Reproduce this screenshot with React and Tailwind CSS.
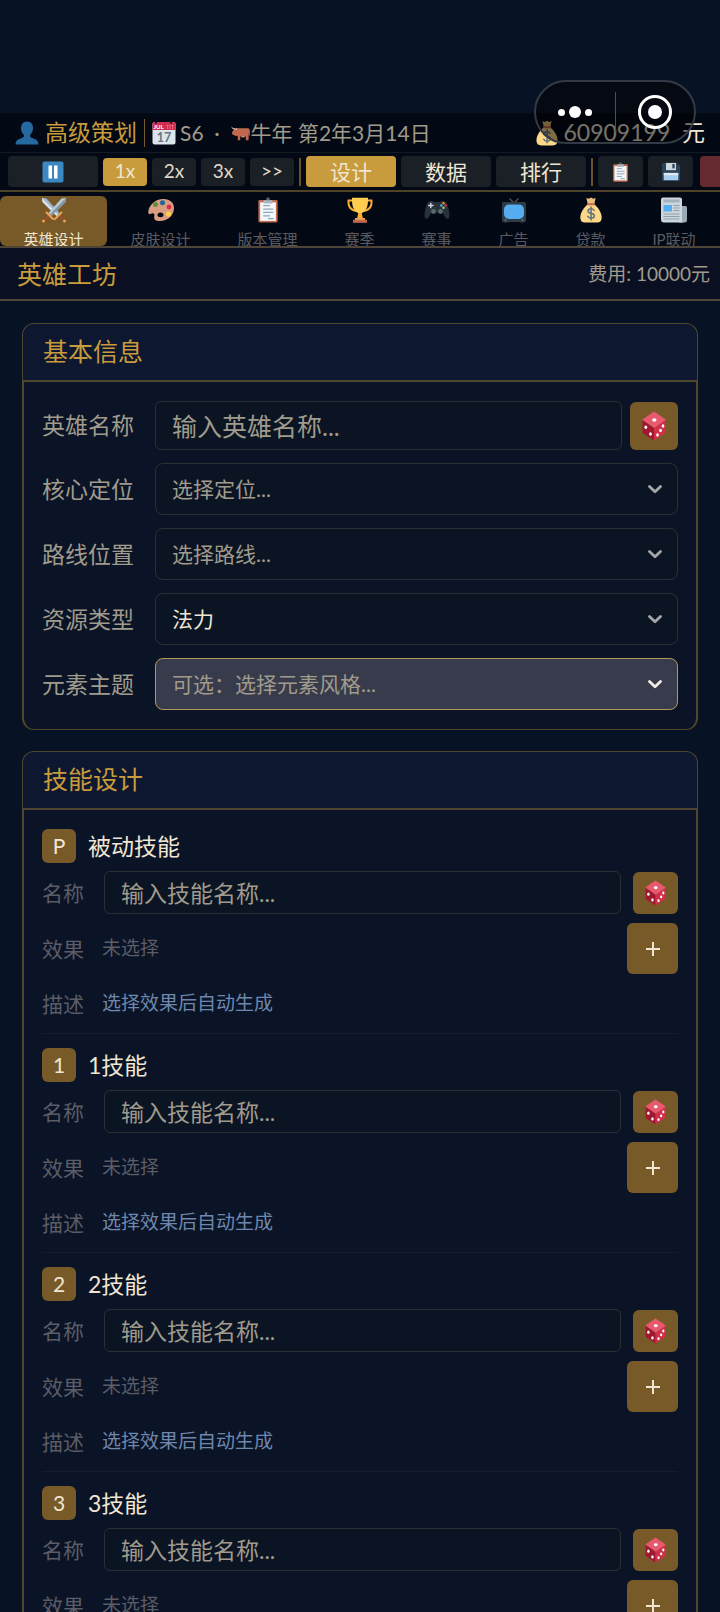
import React, { useState } from 'react';

const PersonIcon = ({ className }) => (
  <svg viewBox="0 0 24 24" className={className} aria-hidden="true">
    <path d="M12 .5c4 0 6 2.800 6 6.700 0 2.600-1.100 5-2.800 6.500-.7 1.700.2 2.800 2 3.400 3.600 1.100 6 2.400 6.300 6.400H.5c.3-4 2.700-5.300 6.300-6.400 1.800-.6 2.700-1.700 2-3.400C7.100 12.200 6 9.800 6 7.200 6 3.300 8 .5 12 .5z" fill="#24699f" />
  </svg>
);

const CalendarIcon = ({ className }) => (
  <svg viewBox="0 0 24 24" className={className} aria-hidden="true">
    <rect x=".5" y="1" width="23" height="22.500" rx="2" fill="#dde5ec" />
    <path d="M.5 9V3a2 2 0 0 1 2-2h19a2 2 0 0 1 2 2v6z" fill="#d52d4e" />
    <path d="M3 0h2v2.500H3zM18 0h2v2.500h-2z" fill="#10151f" />
    <text x="1.500" y="7.600" fontSize="6" fontWeight="700" fill="#fff">JUL</text>
    <path d="M15 4h1.200v1.200H15zM17.500 4h1.200v1.200h-1.200zM20 4h1.200v1.200H20zM15 6.400h1.200v1.200H15zM17.500 6.400h1.200v1.200h-1.200zM20 6.400h1.200v1.200H20z" fill="#f29bad" />
    <text x="12" y="20.800" fontSize="12.500" fontWeight="700" textAnchor="middle" fill="#66757f">17</text>
  </svg>
);

const OxIcon = ({ className }) => (
  <svg viewBox="0 0 24 20" className={className} aria-hidden="true">
    <path d="M4 4h16.500c1.800 0 2.500 1.500 2.500 3.500v6h-1V10l-.5 3v6H18v-4.500H11V19H8v-4.500L7 13l-1 1-3-1.500-2-.5L.8 9 3 6z" fill="#c1694f" />
    <path d="M.3 1.500C1 3.800 2.500 4.200 4.200 4.200l.6 1.400C2 5.800-.2 4 .3 1.500zM7 3.500C6.800 4.300 6 5 5 5l.5 1C7 5.800 7.500 4.700 7 3.500z" fill="#e8dfd3" />
    <path d="M12.500 14h4v1.500h-4z" fill="#e39f8a" />
  </svg>
);

const MoneyIcon = ({ className }) => (
  <svg viewBox="0 0 24 28" className={className} aria-hidden="true">
    <path d="M7 1l2.500 1L12 .5 14.500 2 17 1l-1.500 6.500h-7z" fill="#e9bf7b" />
    <path d="M8.300 8h7.400c4.300 3.500 7.800 9 7.800 14 0 4-2 5.500-5.500 5.500H6C2.500 27.500.5 26 .5 22 .5 17 4 11.500 8.300 8z" fill="#fdd888" />
    <rect x="7.500" y="6.600" width="9" height="2.200" rx="1.100" fill="#bf6952" />
    <path d="M15.400 14.300c-.6-1.100-1.800-1.700-3.300-1.700-2 0-3.300 1-3.300 2.500 0 3.600 6.800 1.500 6.800 5.200 0 1.500-1.500 2.600-3.500 2.600-1.700 0-3.100-.8-3.600-2.100M12.100 10.700v14" fill="none" stroke="#67757f" strokeWidth="1.700" strokeLinecap="round" />
  </svg>
);

const PauseIcon = ({ className }) => (
  <svg viewBox="0 0 22 22" className={className} aria-hidden="true">
    <rect x=".5" y=".5" width="21" height="21" rx="2" fill="#3b88c3" />
    <path d="M6.500 4.500H10v13H6.500zM12 4.500h3.500v13H12z" fill="#fff" />
  </svg>
);

const ClipboardIcon = ({ className }) => (
  <svg viewBox="0 0 22 27" className={className} aria-hidden="true">
    <rect x="1" y="3" width="20" height="23.500" rx="1.500" fill="#c1694f" />
    <path d="M2.800 5.500h16.400v19.300H2.800z" fill="#f4f7f9" />
    <path d="M6 9h7M6 12.500h10.500M6 16h10.500M6 19.500h7M11 22.500h6" stroke="#8ba6bd" strokeWidth="1.300" />
    <path d="M6.500 3.500h3a1.800 1.800 0 0 1 3 0h3v3.200h-9z" fill="#a9b8c4" />
    <circle cx="11" cy="2.200" r="1.300" fill="none" stroke="#77889a" strokeWidth="1" />
  </svg>
);

const SaveIcon = ({ className }) => (
  <svg viewBox="0 0 22 22" className={className} aria-hidden="true">
    <path d="M1 3a2 2 0 0 1 2-2h14.500L21 4.500V19a2 2 0 0 1-2 2H3a2 2 0 0 1-2-2z" fill="#2b4158" />
    <path d="M5.500 1h11v8h-11z" fill="#ccd6dd" />
    <path d="M12.500 2.200h2.500V7h-2.500z" fill="#2b4158" />
    <path d="M3 12h16v8H3z" fill="#a5cff0" />
    <path d="M3 12h16v2.500H3z" fill="#e1e8ed" />
  </svg>
);

const SwordsIcon = ({ className }) => (
  <svg viewBox="0 0 26 26" className={className} aria-hidden="true">
    <path d="M1 .8l4.500.7 13 14.500-3 3L1.500 5z" fill="#9fb3c4" />
    <path d="M1 .8L17 17.500l-1.500 1.500L1.500 5z" fill="#d7e2ea" />
    <path d="M25 .8l-4.500.7L7.500 16l3 3L24.500 5z" fill="#b8c9d6" />
    <path d="M25 .8L9 17.500l1.500 1.500L24.500 5z" fill="#8197a9" />
    <path d="M14 22l6.500-6.500M12 22l-6.500-6.500" stroke="#f0a052" strokeWidth="2" strokeLinecap="round" />
    <path d="M18.500 19l4 4M7.500 19l-4 4" stroke="#9a4e2e" strokeWidth="2.400" />
    <circle cx="23.500" cy="24" r="1.500" fill="#f0a052" />
    <circle cx="2.500" cy="24" r="1.500" fill="#f0a052" />
  </svg>
);

const PaletteIcon = ({ className }) => (
  <svg viewBox="0 0 26 26" className={className} aria-hidden="true">
    <path d="M16 2C8 1.500.5 8 .3 15c-.1 2 1 2.700 2.800 1.800 2.400-1.200 3.800.2 3.200 2.600-.7 3 1.500 4.600 5.500 4.600C20 24 26 18 26 11c0-5.500-4.500-8.700-10-9zM12.500 20.200c-1.800 0-3-1-3-2.300s1.200-2.300 3-2.300 3 1 3 2.300-1.200 2.300-3 2.300z" fill="#d99e82" fillRule="evenodd" />
    <circle cx="7.500" cy="7.500" r="2.500" fill="#5c913b" />
    <circle cx="14.500" cy="5.800" r="2.500" fill="#226699" />
    <circle cx="21" cy="10" r="2.400" fill="#dd2e44" />
    <circle cx="20.500" cy="17" r="2.600" fill="#ffcc4d" />
  </svg>
);

const TrophyIcon = ({ className }) => (
  <svg viewBox="0 0 26 26" className={className} aria-hidden="true">
    <path d="M6 3.500H1.500C1 9 3.500 13 9 14M20 3.500h4.500C25 9 22.500 13 17 14" fill="none" stroke="#ffac33" strokeWidth="2" />
    <path d="M5 .8h16c.3 7-1 13-6 15.200h-4C6 13.800 4.700 7.800 5 .8z" fill="#ffcc4d" />
    <path d="M11.200 16h3.600l1 5h-5.600z" fill="#ffac33" />
    <path d="M8 21h10v2H8z" fill="#f0a052" />
    <path d="M6 22.800h14v3H6z" fill="#c1694f" />
  </svg>
);

const GamepadIcon = ({ className }) => (
  <svg viewBox="0 0 26 20" className={className} aria-hidden="true">
    <path d="M3.500 3C5 .5 9 .5 10 2h6c1-1.500 5-1.500 6.500 1 2 4 3.300 10 3 13.500-.3 3-3 3-4.500.5l-2.500-4.500h-11L5 17C3.500 19.500.8 19.500.5 16.500.2 13 1.500 7 3.500 3z" fill="#26313a" />
    <circle cx="9.500" cy="11.500" r="2.400" fill="#596871" />
    <circle cx="16.500" cy="11.500" r="2.400" fill="#596871" />
    <path d="M6.800 2.800v5.400M4.100 5.500h5.400" stroke="#ccd6dd" strokeWidth="1.400" />
    <circle cx="19.500" cy="3.300" r="1.200" fill="#f4900c" />
    <circle cx="19.500" cy="7.700" r="1.200" fill="#a6d388" />
    <circle cx="17.300" cy="5.500" r="1.200" fill="#55acee" />
    <circle cx="21.700" cy="5.500" r="1.200" fill="#dd2e44" />
  </svg>
);

const TvIcon = ({ className }) => (
  <svg viewBox="0 0 26 26" className={className} aria-hidden="true">
    <path d="M13 6L8.500 1.500M13 6l4.500-4.500" stroke="#58525c" strokeWidth="1.300" />
    <path d="M3 24.500h4v1.300H3zM19 24.500h4v1.300h-4z" fill="#29333c" />
    <rect x="1" y="5" width="24" height="20" rx="1.500" fill="#2d3b47" />
    <rect x="3" y="7.500" width="20" height="14.500" rx="5" fill="#55acee" />
    <circle cx="4.500" cy="23" r="1" fill="#66757f" />
    <circle cx="21.500" cy="23" r="1" fill="#66757f" />
  </svg>
);

const NewspaperIcon = ({ className }) => (
  <svg viewBox="0 0 26 26" className={className} aria-hidden="true">
    <path d="M19 9h5.500a1.500 1.500 0 0 1 1.500 1.500V23a2.500 2.500 0 0 1-2.500 2.500H18z" fill="#99aab5" />
    <path d="M0 2.500A2 2 0 0 1 2 .5h17a2 2 0 0 1 2 2V23c0 1 .5 2 1.500 2.500H3A3 3 0 0 1 0 22.500z" fill="#ccd6dd" />
    <path d="M2.500 2.500h16v3h-16z" fill="#a3b2bd" />
    <path d="M2.500 8h8.500v6.500H2.500z" fill="#55acee" />
    <path d="M12.500 8.500h6M12.500 11h6M12.500 13.500h6M2.500 17h16M2.500 19.500h16M2.500 22h16" stroke="#8f9faa" strokeWidth="1.100" />
  </svg>
);

const DiceIcon = ({ className }) => (
  <svg viewBox="0 0 24 30" className={className} aria-hidden="true">
    <path d="M12 .5L23.500 8.500 12 16.500.5 8.500z" fill="#e8596e" />
    <path d="M.5 8.500l11.500 8v13L1.500 22.500a2 2 0 0 1-1-1.700z" fill="#a0182f" />
    <path d="M23.500 8.500l-11.500 8v13l10.500-7a2 2 0 0 0 1-1.700z" fill="#cf2f48" />
    <path d="M.5 8.500l11.500 8 11.500-8" fill="none" stroke="#ee7c8d" strokeWidth=".6" />
    <g fill="#fff">
      <ellipse cx="12.300" cy="9" rx="2.200" ry="1.700" />
      <ellipse cx="3.800" cy="16.300" rx="1.400" ry="1.800" />
      <ellipse cx="8.500" cy="23" rx="1.400" ry="1.800" />
      <ellipse cx="21" cy="15" rx="1.300" ry="1.700" />
      <ellipse cx="18.500" cy="19.500" rx="1.300" ry="1.700" />
      <ellipse cx="15.500" cy="24" rx="1.300" ry="1.700" />
    </g>
  </svg>
);

const ChevronIcon = ({ className }) => (
  <svg viewBox="0 0 14 9" className={className} aria-hidden="true">
    <path d="M1.500 1.500L7 6.800l5.500-5.300" fill="none" stroke="currentColor" strokeWidth="2.800" strokeLinecap="round" strokeLinejoin="round" />
  </svg>
);

const SPEEDS = ['1x', '2x', '3x', '>>'];
const VIEWS = ['设计', '数据', '排行'];

const TABS = [
  { label: '英雄设计', Icon: SwordsIcon, width: 'w-[107px]' },
  { label: '皮肤设计', Icon: PaletteIcon, width: 'w-[107px]' },
  { label: '版本管理', Icon: ClipboardIcon, width: 'w-[107px]' },
  { label: '赛季', Icon: TrophyIcon, width: 'w-[77px]' },
  { label: '赛事', Icon: GamepadIcon, width: 'w-[77px]' },
  { label: '广告', Icon: TvIcon, width: 'w-[77px]' },
  { label: '贷款', Icon: MoneyIcon, width: 'w-[77px]' },
  { label: 'IP联动', Icon: NewspaperIcon, width: 'w-[90px]' },
];

const SELECTS = [
  { id: 'role', label: '核心定位', options: ['选择定位...'] },
  { id: 'lane', label: '路线位置', options: ['选择路线...'] },
  { id: 'resource', label: '资源类型', options: ['法力'], filled: true },
  { id: 'element', label: '元素主题', options: ['可选：选择元素风格...'], highlighted: true },
];

const SKILLS = [
  { key: 'P', title: '被动技能' },
  { key: '1', title: '1技能' },
  { key: '2', title: '2技能' },
  { key: '3', title: '3技能' },
];

// System capsule that floats over the top right of the page
const Capsule = () => (
  <div className="absolute top-20 right-6 z-10 flex h-16 w-[162px] items-center rounded-full border-2 border-[#343a45] bg-black/50">
    <button aria-label="更多" className="flex flex-1 items-center justify-center gap-1">
      <span className="size-[7px] rounded-full bg-white" />
      <span className="size-3 rounded-full bg-white" />
      <span className="size-[7px] rounded-full bg-white" />
    </button>
    <span className="h-10 w-px bg-[#4a4e57]" />
    <button aria-label="关闭" className="flex flex-1 items-center justify-center">
      <span className="flex size-[34px] items-center justify-center rounded-full border-[3px] border-white">
        <span className="size-[14px] rounded-full bg-white" />
      </span>
    </button>
  </div>
);

const StatusBar = () => (
  <div className="flex h-10 shrink-0 items-center border-b border-[#141a22] bg-[#020914] px-[15px]">
    <PersonIcon className="size-6 shrink-0" />
    <span className="ml-[6px] text-[23px] text-[#c89b3c]">高级策划</span>
    <span className="mx-[7px] h-7 w-px bg-[#785a28]" />
    <CalendarIcon className="size-6 shrink-0" />
    <span className="ml-1 flex items-center text-[21px] whitespace-pre text-[#a09b8c]">
      {'S6  ·  '}
      <OxIcon className="h-4 w-5" />
      牛年 第2年3月14日
    </span>
    <div className="ml-auto flex items-center text-[23px] text-[#f0e6d2]">
      <MoneyIcon className="mr-[6px] h-[26px] w-[22px]" />
      <span className="whitespace-pre">60909199  元</span>
    </div>
  </div>
);

const Toolbar = ({ speed, onSpeed, view, onView }) => (
  <div className="flex h-[39px] shrink-0 items-center gap-[5px] overflow-hidden border-b-2 border-[#4e4229] bg-[#020914] pl-2">
    <button aria-label="暂停" className="flex h-[31px] w-[90px] shrink-0 items-center justify-center rounded bg-[#1a2026]">
      <PauseIcon className="size-[22px]" />
    </button>
    {SPEEDS.map((item) => (
      <button
        key={item}
        onClick={() => onSpeed(item)}
        className={`flex h-7 w-11 shrink-0 items-center justify-center rounded text-[19px] ${
          speed === item ? 'bg-[#c89b3c] text-[#f0e6d2]' : 'bg-[#1a2026] text-[#e0d7c5]'
        }`}
      >
        {item}
      </button>
    ))}
    <span className="h-7 w-[2px] shrink-0 bg-[#6b5128]" />
    {VIEWS.map((item) => (
      <button
        key={item}
        onClick={() => onView(item)}
        className={`flex h-[31px] w-[90px] shrink-0 items-center justify-center rounded text-[21px] ${
          view === item ? 'bg-[#c89b3c] text-[#f0e6d2]' : 'bg-[#1a2026] text-[#f0e6d2]'
        }`}
      >
        {item}
      </button>
    ))}
    <span className="h-7 w-[2px] shrink-0 bg-[#6b5128]" />
    <button aria-label="日志" className="flex h-[31px] w-[45px] shrink-0 items-center justify-center rounded bg-[#1a2026]">
      <ClipboardIcon className="h-5 w-[17px]" />
    </button>
    <button aria-label="保存" className="flex h-[31px] w-[45px] shrink-0 items-center justify-center rounded bg-[#1a2026]">
      <SaveIcon className="size-5" />
    </button>
    <button aria-label="退出" className="ml-[2px] h-[31px] w-[45px] shrink-0 rounded bg-[#652a30]" />
  </div>
);

const TabBar = ({ active, onChange }) => (
  <nav className="flex h-14 shrink-0 overflow-hidden border-b-2 border-[#4e4538] bg-[#020914] pt-1">
    {TABS.map(({ label, Icon, width }) => (
      <button
        key={label}
        onClick={() => onChange(label)}
        className={`flex h-[50px] shrink-0 flex-col items-center gap-2 rounded-md pt-px text-[15px] leading-4 ${width} ${
          active === label ? 'bg-[#785a28] text-[#f0e6d2]' : 'text-[#5b5a60]'
        }`}
      >
        <Icon className="size-[26px] shrink-0" />
        <span>{label}</span>
      </button>
    ))}
  </nav>
);

const Card = ({ title, children }) => (
  <section>
    <h2 className="flex h-[59px] items-center rounded-t-xl border border-b-2 border-[#4f4632] bg-[#0e1730] pl-5 text-[25px] text-[#c89b3c]">
      {title}
    </h2>
    <div className="rounded-b-xl border-x-2 border-b border-[#54462a] bg-[#0a1426] px-[18px] py-[19px]">
      {children}
    </div>
  </section>
);

const SelectField = ({ id, label, options, filled, highlighted }) => (
  <div className="flex items-center">
    <label htmlFor={id} className="w-[113px] shrink-0 text-[23px] text-[#a09b8c]">{label}</label>
    <div className="relative flex-1">
      <select
        id={id}
        className={`h-[52px] w-full appearance-none rounded-lg border px-4 text-[21px] outline-none ${
          highlighted ? 'border-[#b09a55] bg-[#383b4b]' : 'border-[#2c3035] bg-[#0a1423]'
        } ${filled ? 'text-[#f0e6d2]' : 'text-[#a09b8c]'}`}
      >
        {options.map((option) => (
          <option key={option}>{option}</option>
        ))}
      </select>
      <ChevronIcon
        className={`pointer-events-none absolute top-[22px] right-4 h-[9px] w-[14px] ${
          highlighted ? 'text-[#f0ece4]' : 'text-[#a4a6a8]'
        }`}
      />
    </div>
  </div>
);

const BasicInfo = () => (
  <Card title="基本信息">
    <div className="flex flex-col gap-[13px]">
      <div className="flex items-center">
        <label htmlFor="hero-name" className="w-[113px] shrink-0 text-[23px] text-[#a09b8c]">英雄名称</label>
        <input
          id="hero-name"
          type="text"
          placeholder="输入英雄名称..."
          className="h-[49px] min-w-0 flex-1 rounded-md border border-[#2c3035] bg-[#0a1423] px-4 text-[25px] text-[#f0e6d2] outline-none placeholder:text-[#a09b8c]"
        />
        <button aria-label="随机名称" className="ml-2 flex size-12 shrink-0 items-center justify-center rounded-md bg-[#785a28]">
          <DiceIcon className="h-[30px] w-6" />
        </button>
      </div>
      {SELECTS.map((field) => (
        <SelectField key={field.id} {...field} />
      ))}
    </div>
  </Card>
);

const SkillBlock = ({ skillKey, title }) => (
  <div className="mb-[14px] border-b border-[#141d30] text-[21px] text-[#5b5c66]">
    <h3 className="mb-2 flex h-[34px] items-center gap-3 text-[23px] text-[#f0e6d2]">
      <span className="flex size-[34px] items-center justify-center rounded-md bg-[#785a28] text-[21px]">{skillKey}</span>
      {title}
    </h3>
    <div className="flex items-center">
      <label htmlFor={`skill-${skillKey}`} className="w-[62px] shrink-0">名称</label>
      <input
        id={`skill-${skillKey}`}
        type="text"
        placeholder="输入技能名称..."
        className="h-[43px] min-w-0 flex-1 rounded-md border border-[#2c3035] bg-[#0a1423] px-4 text-[23px] text-[#f0e6d2] outline-none placeholder:text-[#a09b8c]"
      />
      <button aria-label="随机名称" className="ml-3 flex h-[42px] w-[45px] shrink-0 items-center justify-center rounded-md bg-[#785a28]">
        <DiceIcon className="h-[26px] w-[21px]" />
      </button>
    </div>
    <div className="mt-[9px] flex items-center">
      <span className="w-[60px] shrink-0">效果</span>
      <span className="flex-1 text-[19px]">未选择</span>
      <button aria-label="添加效果" className="flex size-[51px] shrink-0 items-center justify-center rounded-md bg-[#785a28] text-[#f0e6d2]">
        <svg viewBox="0 0 14 14" className="size-[14px]" aria-hidden="true">
          <path d="M7 0v14M0 7h14" stroke="currentColor" strokeWidth="2" />
        </svg>
      </button>
    </div>
    <div className="flex h-[59px] items-center">
      <span className="w-[60px] shrink-0">描述</span>
      <span className="text-[19px] text-[#6f87ad]">选择效果后自动生成</span>
    </div>
  </div>
);

const App = () => {
  const [speed, setSpeed] = useState('1x');
  const [view, setView] = useState('设计');
  const [tab, setTab] = useState('英雄设计');

  return (
    <div className="relative flex h-screen flex-col overflow-hidden bg-[#081225] pt-[113px] font-[Lato,'Noto_Sans_CJK_SC',sans-serif] font-normal">
      <Capsule />
      <StatusBar />
      <Toolbar speed={speed} onSpeed={setSpeed} view={view} onView={setView} />
      <TabBar active={tab} onChange={setTab} />

      <header className="flex h-[53px] shrink-0 items-center justify-between border-b-2 border-[#4e4538] bg-[#0a1022] pt-[2px] pr-[10px] pl-[17px]">
        <h1 className="text-[25px] text-[#c89b3c]">英雄工坊</h1>
        <span className="text-[19px] text-[#a09b8c]">费用: 10000元</span>
      </header>

      <main className="flex flex-1 flex-col gap-[21px] overflow-y-auto px-[22px] pt-[22px] [scrollbar-width:none]">
        <BasicInfo />
        <Card title="技能设计">
          {SKILLS.map((skill) => (
            <SkillBlock key={skill.key} skillKey={skill.key} title={skill.title} />
          ))}
        </Card>
      </main>
    </div>
  );
};

export default App;
